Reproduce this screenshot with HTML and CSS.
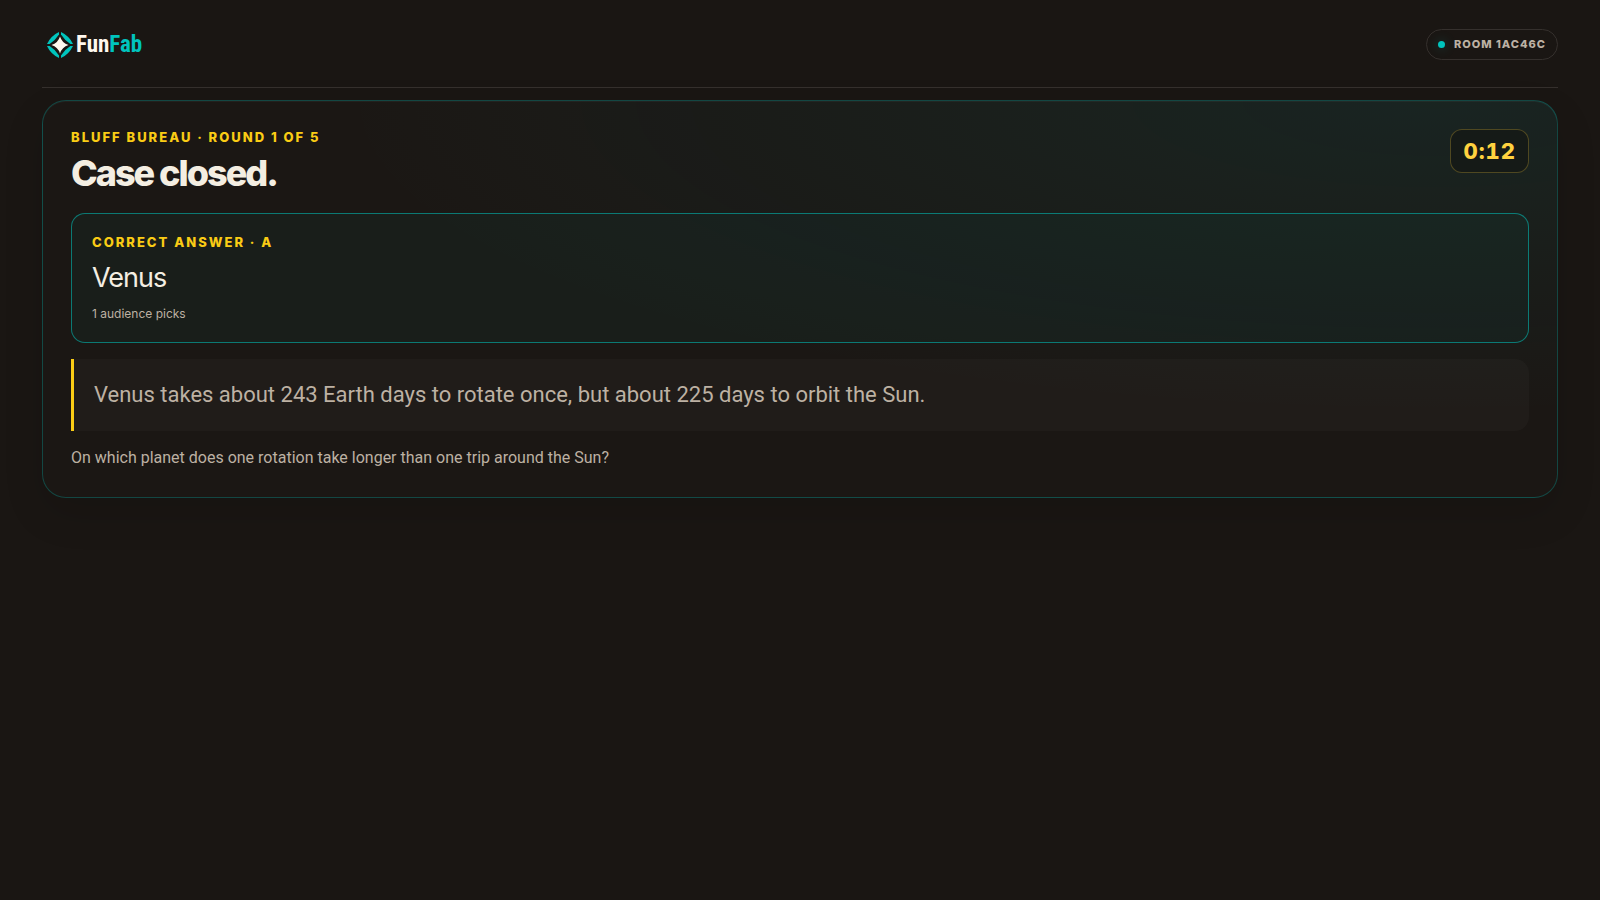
FILE: index.html
```html
<!DOCTYPE html>
<html lang="en">
<head>
    <meta charset="UTF-8">
    <meta name="viewport" content="width=device-width, initial-scale=1.0">
    <title>FunFab - Bluff Bureau</title>
    <link rel="stylesheet" href="styles.css">
</head>
<body>
    <header class="topbar">
        <div class="logo">
            <svg class="logo-mark" viewBox="0 0 26 26" aria-hidden="true">
                <g fill="#00c4bd">
                    <path id="leaf" d="M12 0 Q4 3.6 0 12 L2.6 12 Q8.4 8.4 12 2.6 Z"/>
                    <use href="#leaf" transform="rotate(90 13 13)"/>
                    <use href="#leaf" transform="rotate(180 13 13)"/>
                    <use href="#leaf" transform="rotate(270 13 13)"/>
                </g>
                <path fill="#fff8ee" d="M13 4.5 Q15 11 21.5 13 Q15 15 13 21.5 Q11 15 4.5 13 Q11 11 13 4.5 Z"/>
            </svg>
            <span class="logo-text">Fun<span class="logo-accent">Fab</span></span>
        </div>
        <div class="room-pill"><span class="dot"></span>Room 1AC46C</div>
    </header>

    <main class="card">
        <div class="card-head">
            <div>
                <p class="eyebrow">Bluff Bureau · Round 1 of 5</p>
                <h1>Case closed.</h1>
            </div>
            <div class="timer" role="timer">0:12</div>
        </div>

        <section class="answer">
            <p class="eyebrow">Correct answer · A</p>
            <p class="answer-text">Venus</p>
            <p class="picks">1 audience picks</p>
        </section>

        <p class="fact">Venus takes about 243 Earth days to rotate once, but about 225 days to orbit the Sun.</p>
        <p class="question">On which planet does one rotation take longer than one trip around the Sun?</p>
    </main>
</body>
</html>
```
FILE: styles.css
```css
* {
    box-sizing: border-box;
}
body {
    margin: 0;
    padding: 0 42px;
    min-height: 100vh;
    background-color: #1a1613;
    color: #f4eee2;
    font-family: Inter, sans-serif;
    font-size: 16px;
    line-height: 24px;
}
h1, p {
    margin: 0;
}

/* Top bar */
.topbar {
    display: flex;
    align-items: center;
    justify-content: space-between;
    padding: 29px 0 27px;
    border-bottom: 1px solid #35302d;
}
.logo {
    display: flex;
    align-items: center;
    gap: 3px;
    padding-left: 5px;
}
.logo-mark {
    width: 26px;
    height: 26px;
}
.logo-text {
    font-family: "Roboto Condensed", Roboto, sans-serif;
    font-size: 23px;
    font-weight: 700;
    color: #fff8ee;
}
.logo-accent {
    color: #00c4bd;
}
.room-pill {
    display: flex;
    align-items: center;
    gap: 9px;
    padding: 6px 11px;
    border: 1px solid #35302d;
    border-radius: 999px;
    color: #bdb1a3;
    font-size: 11px;
    font-weight: 800;
    line-height: 17px;
    letter-spacing: 1px;
    text-transform: uppercase;
}
.dot {
    width: 7px;
    height: 7px;
    border-radius: 50%;
    background-color: #00c4bd;
    box-shadow: 0 0 12px rgba(0, 196, 189, 0.3);
}

/* Reveal card */
.card {
    display: flex;
    flex-direction: column;
    gap: 16px;
    margin-top: 12px;
    padding: 28px;
    border: 1px solid rgba(0, 196, 189, 0.28);
    border-radius: 24px;
    background: radial-gradient(ellipse at 92% 0%, rgba(0, 196, 189, 0.08), transparent 56%), #1b1714;
    box-shadow: 0 16px 40px rgba(0, 0, 0, 0.12), inset 0 1px 0 rgba(255, 255, 255, 0.04);
}
.card-head {
    display: flex;
    align-items: flex-start;
    justify-content: space-between;
    padding-bottom: 2px;
}
.eyebrow {
    color: #facc15;
    font-size: 13px;
    font-weight: 800;
    line-height: 16px;
    letter-spacing: 2px;
    text-transform: uppercase;
}
h1 {
    margin-top: 6px;
    font-size: 36px;
    font-weight: 800;
    line-height: 44px;
    letter-spacing: -2px;
}
.timer {
    padding: 8px 12px;
    border: 1px solid rgba(255, 210, 63, 0.25);
    border-radius: 12px;
    background-color: #151a17;
    color: #ffd23f;
    font-size: 22px;
    font-weight: 800;
    line-height: 26px;
    letter-spacing: 1px;
    font-variant-numeric: tabular-nums;
}
.answer {
    padding: 20px;
    border: 1px solid rgba(0, 196, 189, 0.55);
    border-radius: 14px;
    background-color: rgba(0, 196, 189, 0.04);
}
.answer-text {
    margin-top: 8px;
    font-size: 27px;
    line-height: 40px;
    letter-spacing: -1px;
}
.picks {
    margin-top: 8px;
    color: #bdb1a3;
    font-size: 12px;
    line-height: 16px;
}
.fact {
    padding: 20px;
    border-left: 3px solid #facc15;
    border-radius: 0 14px 14px 0;
    background-color: rgba(255, 248, 238, 0.025);
    color: #bdb1a3;
    font-family: Roboto, sans-serif;
    font-size: 22px;
    line-height: 32px;
}
.question {
    color: #bdb1a3;
    font-family: Roboto, sans-serif;
    font-size: 16px;
    line-height: 22px;
}
```
